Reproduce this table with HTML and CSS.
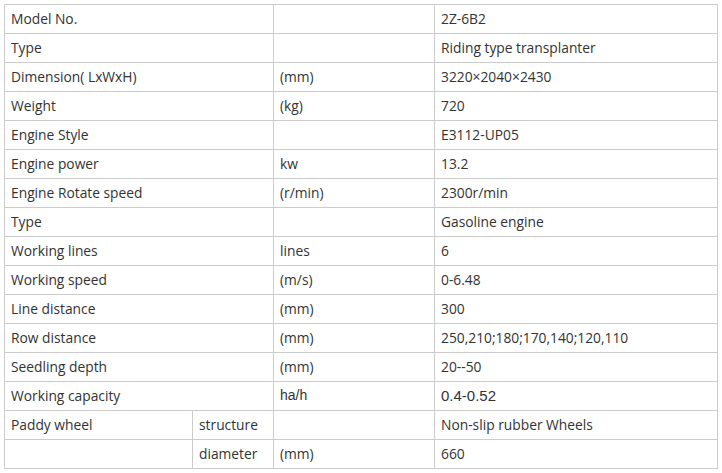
FILE: index.html
```html
<!DOCTYPE html>
<html>
<head>
<meta charset="utf-8">
<link rel="stylesheet" href="styles.css">
</head>
<body>
<div class="wrap">
<table class="spec">
<colgroup><col class="c1"><col class="c2"><col class="c3"><col class="c4"></colgroup>
<tr><td colspan="2">Model No.</td><td></td><td>2Z-6B2</td></tr>
<tr><td colspan="2">Type</td><td></td><td>Riding type transplanter</td></tr>
<tr><td colspan="2">Dimension( LxWxH)</td><td>(mm)</td><td>3220×2040×2430</td></tr>
<tr><td colspan="2">Weight</td><td>(kg)</td><td>720</td></tr>
<tr><td colspan="2">Engine Style</td><td></td><td>E3112-UP05</td></tr>
<tr><td colspan="2">Engine power</td><td>kw</td><td>13.2</td></tr>
<tr><td colspan="2">Engine Rotate speed</td><td>(r/min)</td><td>2300r/min</td></tr>
<tr><td colspan="2">Type</td><td></td><td>Gasoline engine</td></tr>
<tr><td colspan="2">Working lines</td><td>lines</td><td>6</td></tr>
<tr><td colspan="2">Working speed</td><td>(m/s)</td><td>0-6.48</td></tr>
<tr><td colspan="2">Line distance</td><td>(mm)</td><td>300</td></tr>
<tr><td colspan="2">Row distance</td><td>(mm)</td><td>250,210;180;170,140;120,110</td></tr>
<tr><td colspan="2">Seedling depth</td><td>(mm)</td><td>20--50</td></tr>
<tr><td colspan="2">Working capacity</td><td class="arial">ha/h</td><td class="arial big">0.4-0.52</td></tr>
<tr><td>Paddy wheel</td><td>structure</td><td></td><td>Non-slip rubber Wheels</td></tr>
<tr><td></td><td>diameter</td><td>(mm)</td><td>660</td></tr>
</table>
</div>
</body>
</html>
```
FILE: styles.css
```css
html, body { margin: 0; padding: 0; background: #fff; }
.wrap { padding: 4px; }
.spec {
  border-collapse: collapse;
  table-layout: fixed;
  width: 714px;
  font-family: "Open Sans", "Noto Sans", sans-serif;
  font-size: 13.8px;
  color: #333;
}
.c1 { width: 188px; }
.c2 { width: 81px; }
.c3 { width: 161px; }
.c4 { width: 283px; }
.spec td {
  border: 1px solid #cccccc;
  height: 29px;
  padding: 0 6px 2px;
  box-sizing: border-box;
  vertical-align: middle;
  white-space: nowrap;
}
.spec .arial { font-family: "Liberation Sans", Arial, sans-serif; font-size: 14px; }
.spec .big { font-size: 15px; }
```
